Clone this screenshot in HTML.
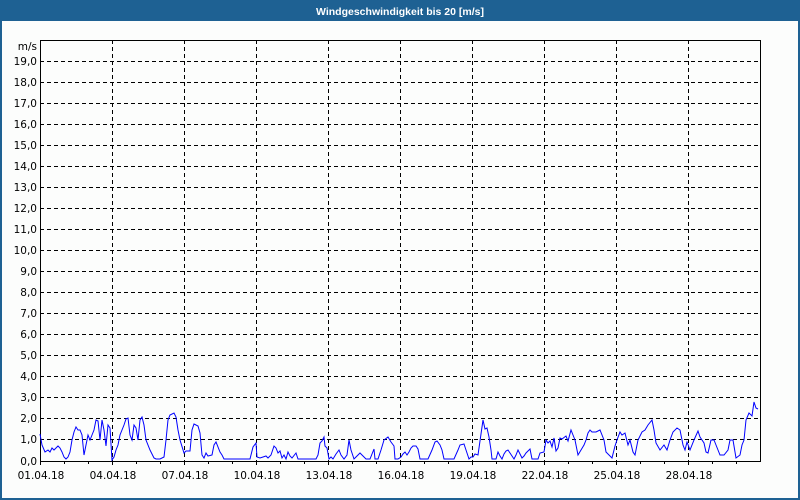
<!DOCTYPE html>
<html><head><meta charset="utf-8"><style>
html,body{margin:0;padding:0}
body{width:800px;height:500px;background:#fcfdfc;position:relative;overflow:hidden;font-family:Tahoma,"DejaVu Sans","Liberation Sans",sans-serif}
</style></head><body>
<svg width="800" height="500" xmlns="http://www.w3.org/2000/svg" style="position:absolute;left:0;top:0">
<rect x="0" y="0" width="800" height="500" fill="#fcfdfc"/>
<rect x="0" y="0" width="800" height="21" fill="#1e6193"/>
<rect x="0" y="0" width="2" height="500" fill="#1e6193"/>
<rect x="798" y="0" width="2" height="500" fill="#1e6193"/>
<rect x="0" y="498" width="800" height="2" fill="#1e6193"/>
<text x="400" y="15" fill="#fff" font-weight="bold" text-anchor="middle" font-family="Liberation Sans,sans-serif" style="font-size:10.5px">Windgeschwindigkeit bis 20 [m/s]</text>
<g stroke="#000" stroke-width="1" stroke-dasharray="4,3" shape-rendering="crispEdges">
<path d="M40 61.5H760M40 82.5H760M40 103.5H760M40 124.5H760M40 145.5H760M40 166.5H760M40 187.5H760M40 208.5H760M40 229.5H760M40 250.5H760M40 271.5H760M40 292.5H760M40 313.5H760M40 334.5H760M40 355.5H760M40 376.5H760M40 397.5H760M40 418.5H760M40 439.5H760"/>
<path d="M112.5 40V461M184.5 40V461M256.5 40V461M328.5 40V461M400.5 40V461M472.5 40V461M544.5 40V461M616.5 40V461M688.5 40V461"/>
</g>
<g stroke="#000" stroke-width="1" shape-rendering="crispEdges" fill="none">
<rect x="40.5" y="40.5" width="720" height="421"/>
<path d="M40.5 461v4M64.5 461v3M88.5 461v3M112.5 461v4M136.5 461v3M160.5 461v3M184.5 461v4M208.5 461v3M232.5 461v3M256.5 461v4M280.5 461v3M304.5 461v3M328.5 461v4M352.5 461v3M376.5 461v3M400.5 461v4M424.5 461v3M448.5 461v3M472.5 461v4M496.5 461v3M520.5 461v3M544.5 461v4M568.5 461v3M592.5 461v3M616.5 461v4M640.5 461v3M664.5 461v3M688.5 461v4M712.5 461v3M736.5 461v3"/>
</g>
<g fill="#000" text-anchor="end" font-family="DejaVu Sans,Liberation Sans,sans-serif" style="font-size:10.5px">
<text x="37" y="50">m/s</text>
<text x="37" y="65">19,0</text><text x="37" y="86">18,0</text><text x="37" y="107">17,0</text><text x="37" y="128">16,0</text><text x="37" y="149">15,0</text><text x="37" y="170">14,0</text><text x="37" y="191">13,0</text><text x="37" y="212">12,0</text><text x="37" y="233">11,0</text><text x="37" y="254">10,0</text><text x="37" y="275">9,0</text><text x="37" y="296">8,0</text><text x="37" y="317">7,0</text><text x="37" y="338">6,0</text><text x="37" y="359">5,0</text><text x="37" y="380">4,0</text><text x="37" y="401">3,0</text><text x="37" y="422">2,0</text><text x="37" y="443">1,0</text><text x="37" y="465">0,0</text>
</g>
<g fill="#000" text-anchor="middle" font-family="DejaVu Sans,Liberation Sans,sans-serif" style="font-size:10.5px">
<text x="41" y="479">01.04.18</text><text x="113" y="479">04.04.18</text><text x="185" y="479">07.04.18</text><text x="257" y="479">10.04.18</text><text x="329" y="479">13.04.18</text><text x="401" y="479">16.04.18</text><text x="473" y="479">19.04.18</text><text x="545" y="479">22.04.18</text><text x="617" y="479">25.04.18</text><text x="689" y="479">28.04.18</text>
</g>
<polyline fill="none" stroke="#0000ff" stroke-width="1" points="40,434 42,445 45,452 48,450 50,452 52,448 54,450 56,448 58,446 60,448 62,452 64,457 66,459 68,457 70,452 72,440 74,432 76,427 78,430 80,430 82,435 84,455 86,445 88,435 90,440 92,435 94,430 96,420 98,421 100,440 102,420 104,430 106,446 108,425 110,428 112,460 114,457 116,450 118,445 120,435 124,425 126,419 128,418 130,435 132,440 134,425 136,428 138,440 140,420 142,417 144,425 146,440 150,450 154,458 156,459 160,459 164,457 166,440 168,420 170,415 174,413 176,417 178,430 180,440 184,453 186,451 190,451 192,430 194,424 198,426 200,433 202,455 204,458 206,453 208,456 212,455 214,445 216,442 220,452 222,455 224,459 250,459 253,447 256,443 257,457 260,458 263,457 266,456 268,458 271,455 274,446 276,448 278,453 280,451 282,458 284,455 286,459 288,452 290,456 292,458 296,453 298,459 316,459 318,455 320,443 322,441 324,437 325,446 327,448 329,459 331,457 333,459 336,454 339,450 341,455 344,459 347,455 349,440 351,450 354,459 356,457 360,453 363,456 366,459 370,459 374,449 375,459 378,459 381,450 384,440 388,437 391,442 394,446 395,459 398,459 401,457 403,454 405,452 407,455 409,452 411,448 413,446 416,446 418,449 420,459 428,459 432,450 435,442 437,441 440,445 442,450 444,459 454,459 458,450 460,445 464,444 466,450 469,459 471,457 473,457 475,454 478,455 480,441 483,420 485,429 487,428 489,437 491,450 492,459 496,459 498,452 500,456 502,459 504,454 506,451 508,450 510,453 512,456 514,459 516,455 518,450 520,454 522,458 524,456 526,453 528,451 530,449 532,459 538,459 540,453 544,452 546,440 548,443 550,441 552,447 554,438 556,451 558,448 560,438 562,439 566,436 568,441 571,430 573,435 575,440 578,455 581,450 584,445 586,440 588,433 590,430 592,432 596,432 600,430 604,440 606,452 612,458 615,446 617,440 620,432 622,435 625,433 628,445 630,440 633,452 635,455 638,440 642,432 645,430 648,425 652,420 654,430 656,443 660,450 664,445 667,450 670,440 673,432 677,428 680,430 683,445 685,450 687,442 690,450 694,440 698,431 700,437 704,443 706,452 708,453 711,440 714,440 716,445 720,455 724,455 728,450 730,440 733,440 736,458 740,455 742,445 744,440 746,420 749,413 752,416 754,402 756,408 758,409"/>
</svg>
</body></html>
